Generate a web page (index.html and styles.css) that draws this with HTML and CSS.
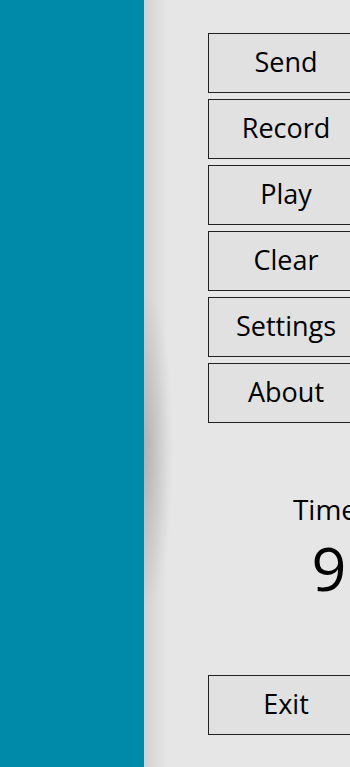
FILE: index.html
```html
<!DOCTYPE html>
<html lang="en">
<head>
    <meta charset="UTF-8">
    <meta name="viewport" content="width=device-width, initial-scale=1.0">
    <title>Recorder</title>
    <link rel="stylesheet" href="styles.css">
</head>
<body>
    <div class="app">
        <div class="sidebar"></div>
        <div class="main">
            <div class="menu">
                <button class="btn">Send</button>
                <button class="btn">Record</button>
                <button class="btn">Play</button>
                <button class="btn">Clear</button>
                <button class="btn">Settings</button>
                <button class="btn">About</button>
            </div>

            <div class="timer">
                <div class="timer-label">Time</div>
                <div class="timer-value">9</div>
            </div>

            <div class="bottom">
                <button class="btn">Exit</button>
            </div>
        </div>
    </div>
</body>
</html>
```

FILE: styles.css
```css
body {
    margin: 0;
    font-family: "Open Sans", "Noto Sans", sans-serif;
    overflow: hidden;
}

.app {
    display: flex;
    width: 350px;
    height: 767px;
}

.sidebar {
    width: 144px;
    flex-shrink: 0;
    background-color: #008aa9;
}

.main {
    flex: 1;
    display: flex;
    flex-direction: column;
    overflow: hidden;
    background-color: #e6e6e6;
    background-image:
        radial-gradient(ellipse 30px 160px at 0 450px, rgba(0,0,0,0.16), rgba(0,0,0,0)),
        linear-gradient(to right, rgba(0,0,0,0.09), rgba(0,0,0,0) 24px);
}

.menu {
    display: flex;
    flex-direction: column;
    gap: 6px;
    padding: 33px 0 0 64px;
}

.btn {
    width: 156px;
    height: 60px;
    flex-shrink: 0;
    box-sizing: border-box;
    border: 1px solid #222;
    background-color: #e1e1e1;
    font-family: "Open Sans", "Noto Sans", sans-serif;
    font-size: 27px;
    color: #000;
    padding: 0 0 3px 0;
}

.timer {
    width: 130px;
    flex-shrink: 0;
    margin: 68px 0 0 116px;
    text-align: center;
}

.timer-label {
    font-size: 28px;
    line-height: 36px;
}

.timer-value {
    font-size: 61px;
    line-height: 62px;
    margin-top: 10px;
    padding-left: 8px;
}

.bottom {
    margin-top: auto;
    padding: 0 0 32px 64px;
}
```
